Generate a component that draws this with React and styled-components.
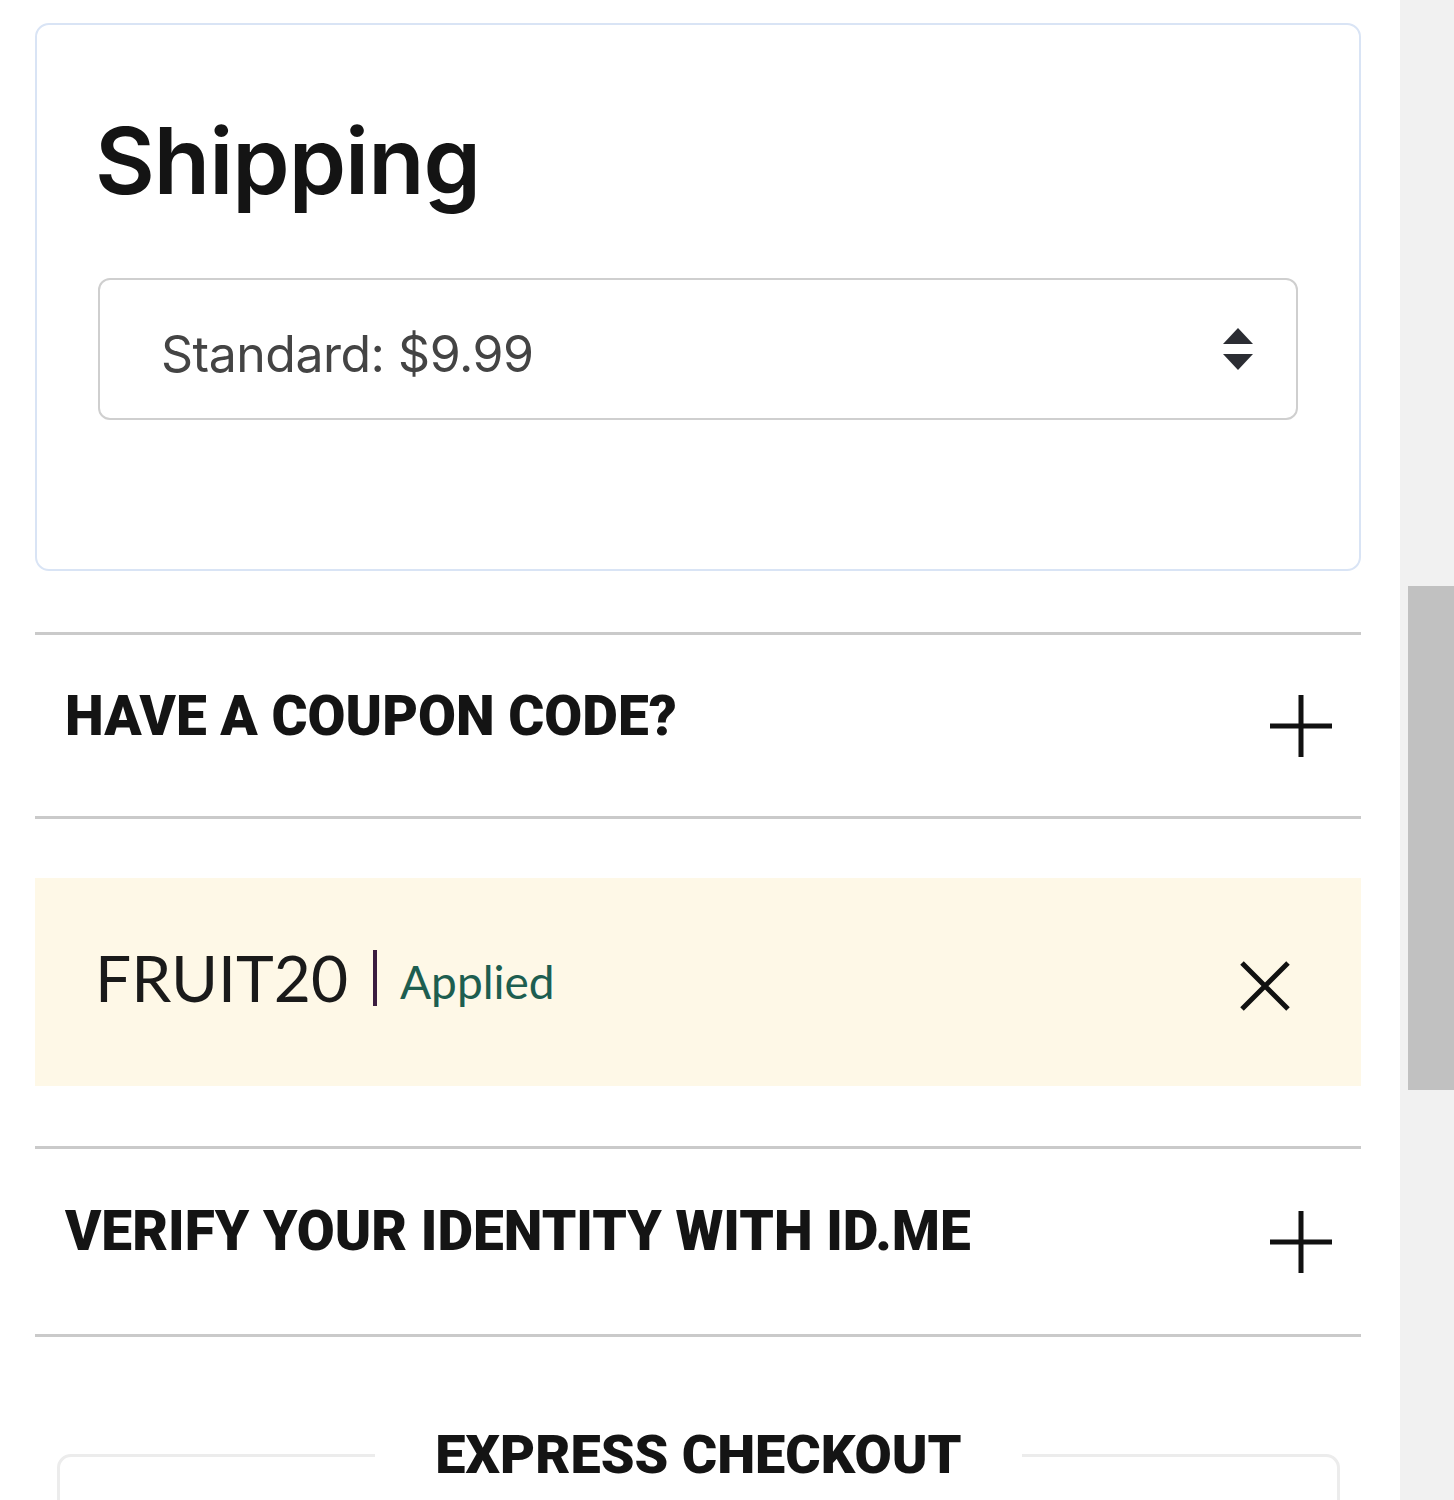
import React from "react";
import styled, { createGlobalStyle } from "styled-components";

const GlobalStyle = createGlobalStyle`
  html, body {
    margin: 0;
    padding: 0;
    background: #ffffff;
  }
  body {
    font-family: "Inter", "Noto Sans", sans-serif;
    color: #1a1a1a;
  }
  * { box-sizing: border-box; }
`;

const Page = styled.div`
  display: flex;
  width: 1454px;
  height: 1500px;
  overflow: hidden;
`;

const Main = styled.main`
  width: 1400px;
  flex: none;
  padding: 23px 39px 0 35px;
  background: #ffffff;
`;

const ScrollTrack = styled.div`
  flex: 1;
  background: #f1f1f1;
  padding-top: 586px;
`;

const ScrollThumb = styled.div`
  margin-left: 8px;
  height: 504px;
  background: #c1c1c1;
`;

const Card = styled.section`
  border: 2px solid #d9e4f5;
  border-radius: 14px;
  padding: 90px 61px 149px 61px;
  display: flex;
  flex-direction: column;
  gap: 71px;
`;

const Heading = styled.h2`
  margin: 0 0 0 -3px;
  font-family: "Inter", "Noto Sans", sans-serif;
  font-weight: 600;
  font-size: 92px;
  line-height: 1;
  letter-spacing: -1px;
  color: #141414;
`;

const SelectBox = styled.div`
  height: 142px;
  border: 2px solid #cfcfcf;
  border-radius: 12px;
  display: flex;
  align-items: center;
  justify-content: space-between;
  padding: 0 42px 0 61px;
`;

const SelectText = styled.span`
  font-family: "Inter", "Noto Sans", sans-serif;
  font-size: 50px;
  font-weight: 400;
  color: #444444;
  letter-spacing: -0.5px;
  margin-top: 10px;
`;

const Divider = styled.hr`
  margin: ${(p) => p.$top || 0}px 0 0 0;
  border: none;
  height: 3px;
  background: #cacaca;
`;

const AccordionRow = styled.div`
  height: ${(p) => p.$height}px;
  display: flex;
  align-items: center;
  justify-content: space-between;
  padding: 0 27px 0 30px;
`;

const RowLabel = styled.span`
  font-family: "Roboto", "Noto Sans", sans-serif;
  font-weight: 900;
  font-size: 55px;
  line-height: 1;
  color: #141414;
  text-transform: uppercase;
  margin-top: ${(p) => p.$shift}px;
`;

const IconButton = styled.button`
  border: none;
  background: transparent;
  padding: 0;
  display: flex;
  align-items: center;
  justify-content: center;
  color: #111111;
  margin-top: ${(p) => p.$shift || 0}px;
`;

const CouponApplied = styled.div`
  margin-top: 59px;
  height: 208px;
  background: #fef8e7;
  display: flex;
  align-items: center;
  justify-content: space-between;
  padding: 0 70px 0 60px;
`;

const CouponInfo = styled.div`
  display: flex;
  align-items: center;
  margin-top: -8px;
`;

const CouponCode = styled.span`
  font-family: "Lato", "Noto Sans", sans-serif;
  font-size: 64px;
  font-weight: 400;
  color: #1a1a1a;
  line-height: 1;
`;

const Separator = styled.span`
  display: block;
  width: 4px;
  height: 56px;
  background: #3b1d3f;
  margin: 0 23px 0 25px;
`;

const AppliedTag = styled.span`
  font-family: "Lato", "Noto Sans", sans-serif;
  font-size: 46px;
  font-weight: 400;
  color: #1d5e50;
  line-height: 1;
  margin-top: 8px;
`;

const Express = styled.fieldset`
  margin: 91px 21px 0 22px;
  border: 3px solid #ececec;
  border-radius: 14px;
  min-height: 200px;
  padding: 0;
`;

const ExpressLegend = styled.legend`
  margin: 0 auto;
  padding: 0 60px;
  font-family: "Roboto", "Noto Sans", sans-serif;
  font-weight: 900;
  font-size: 54px;
  line-height: 1;
  color: #141414;
  text-transform: uppercase;
`;

const Plus = () => (
  <svg width="66" height="66" viewBox="0 0 66 66" aria-hidden="true">
    <path d="M33 2 V64 M2 33 H64" stroke="currentColor" strokeWidth="5" fill="none" />
  </svg>
);

const Cross = () => (
  <svg width="52" height="52" viewBox="0 0 52 52" aria-hidden="true">
    <path d="M3 3 L49 49 M49 3 L3 49" stroke="currentColor" strokeWidth="5" fill="none" />
  </svg>
);

const Sorter = () => (
  <svg width="32" height="44" viewBox="0 0 32 44" aria-hidden="true">
    <path d="M16 1 L31 17 H1 Z M1 27 H31 L16 43 Z" fill="#2b2d33" />
  </svg>
);

export default function App() {
  return (
    <>
      <GlobalStyle />
      <Page>
        <Main>
          <Card>
            <Heading>Shipping</Heading>
            <SelectBox>
              <SelectText>Standard: $9.99</SelectText>
              <Sorter />
            </SelectBox>
          </Card>

          <Divider $top={61} />
          <AccordionRow $height={181}>
            <RowLabel $shift={-18}>Have a coupon code?</RowLabel>
            <IconButton aria-label="Open coupon"><Plus /></IconButton>
          </AccordionRow>
          <Divider />

          <CouponApplied>
            <CouponInfo>
              <CouponCode>FRUIT20</CouponCode>
              <Separator />
              <AppliedTag>Applied</AppliedTag>
            </CouponInfo>
            <IconButton aria-label="Remove coupon" $shift={8}><Cross /></IconButton>
          </CouponApplied>

          <Divider $top={60} />
          <AccordionRow $height={185}>
            <RowLabel $shift={-20}>Verify your identity with ID.me</RowLabel>
            <IconButton aria-label="Open ID.me"><Plus /></IconButton>
          </AccordionRow>
          <Divider />

          <Express>
            <ExpressLegend>Express Checkout</ExpressLegend>
          </Express>
        </Main>
        <ScrollTrack>
          <ScrollThumb />
        </ScrollTrack>
      </Page>
    </>
  );
}
